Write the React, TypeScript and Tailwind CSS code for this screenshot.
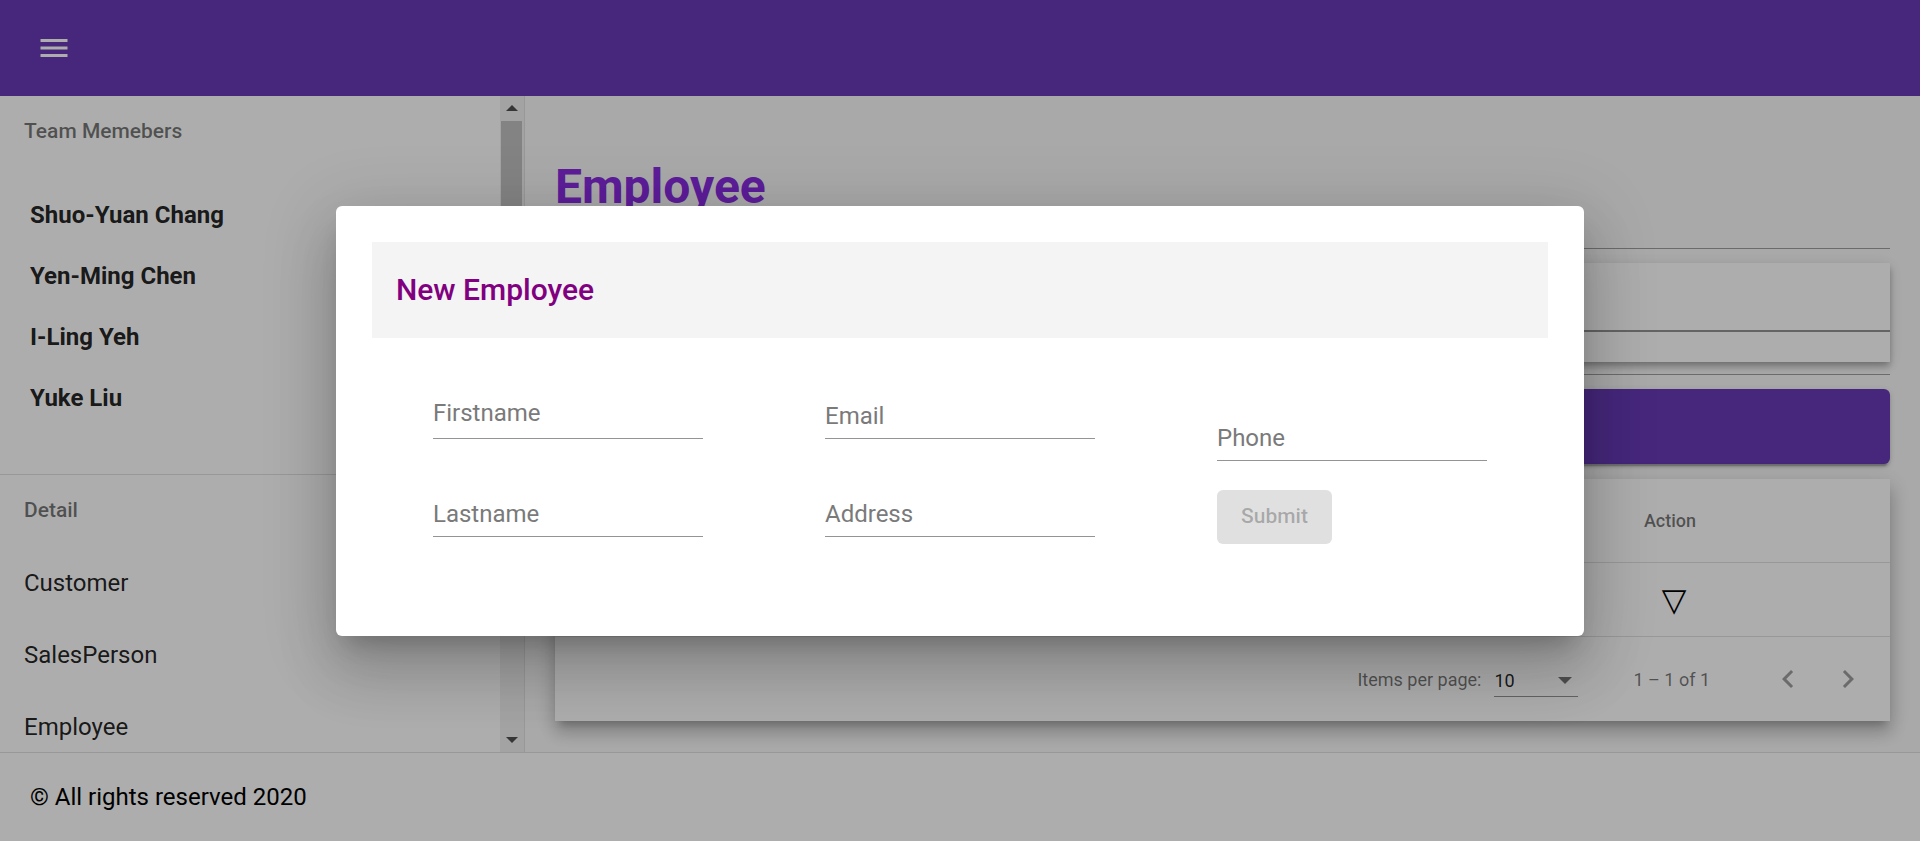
import React from 'react';

const teamMembers = ['Shuo-Yuan Chang', 'Yen-Ming Chen', 'I-Ling Yeh', 'Yuke Liu'];
const detailLinks = ['Customer', 'SalesPerson', 'Employee'];

// columns left of Action sit under the dialog, so they stay empty here
const hiddenColumns = 4;

const MenuIcon = () => (
  <svg width="36" height="36" viewBox="0 0 24 24" fill="#ffffff">
    <path d="M3 18h18v-2H3v2zm0-5h18v-2H3v2zm0-7v2h18V6H3z" />
  </svg>
);

const Chevron = ({ dir }: { dir: 'left' | 'right' }) => (
  <svg width="36" height="36" viewBox="0 0 24 24" fill="rgba(0,0,0,0.38)">
    {dir === 'left' ? (
      <path d="M15.41 7.41L14 6l-6 6 6 6 1.41-1.41L10.83 12z" />
    ) : (
      <path d="M10 6L8.59 7.41 13.17 12l-4.58 4.59L10 18l6-6z" />
    )}
  </svg>
);

const Scrollbar = () => (
  <div className="flex w-[24px] shrink-0 flex-col bg-[#f1f1f1]">
    <div className="flex h-[24px] items-center justify-center">
      <div className="h-0 w-0 border-x-[6px] border-b-[6px] border-x-transparent border-b-[#505050]" />
    </div>
    <div className="ml-[1px] mt-[1px] h-[430px] w-[21px] bg-[#c1c1c1]" />
    <div className="flex-1" />
    <div className="flex h-[24px] items-center justify-center">
      <div className="h-0 w-0 border-x-[6px] border-t-[6px] border-x-transparent border-t-[#505050]" />
    </div>
  </div>
);

const Field = ({ label, type = 'text', shift = true }: { label: string; type?: string; shift?: boolean }) => (
  <div className="h-[98px] w-[270px] pt-[20px]">
    <div className={`h-[49px] border-b border-[#949494] ${shift ? 'pt-[13px]' : 'pt-[10px]'}`}>
      <input
        type={type}
        placeholder={label}
        className="h-[27px] w-full bg-transparent text-[24px] leading-[27px] text-black outline-none placeholder:text-[#7a7a7a]"
      />
    </div>
  </div>
);

export default function App() {
  return (
    <div className="relative h-[841px] w-full overflow-hidden bg-white font-[Roboto,sans-serif]">
      <div className="flex h-full flex-col">
        <header className="flex h-[96px] shrink-0 items-center bg-[#673ab7] pl-[24px]">
          <button className="flex h-[60px] w-[60px] items-center justify-center">
            <MenuIcon />
          </button>
        </header>

        <div className="flex min-h-0 flex-1">
          <aside className="flex w-[525px] shrink-0 border-r border-[#e0e0e0] bg-white">
            <div className="flex-1 overflow-hidden">
              <div className="flex h-[72px] items-center pl-[24px] text-[21px] font-medium text-[rgba(0,0,0,0.54)]">
                Team Memebers
              </div>
              <div className="pb-[46px] pt-[16px]">
                {teamMembers.map(name => (
                  <div key={name} className="flex h-[61px] items-center pl-[30px] text-[24px] font-bold text-[rgba(0,0,0,0.87)]">
                    {name}
                  </div>
                ))}
              </div>
              <div className="border-t border-[#e0e0e0]">
                <div className="flex h-[72px] items-center pl-[24px] text-[21px] font-medium text-[rgba(0,0,0,0.54)]">
                  Detail
                </div>
                {detailLinks.map(link => (
                  <div key={link} className="flex h-[72px] items-center pl-[24px] text-[24px] text-[rgba(0,0,0,0.87)]">
                    {link}
                  </div>
                ))}
              </div>
            </div>
            <Scrollbar />
          </aside>

          <main className="flex min-w-0 flex-1 flex-col overflow-hidden bg-[#fafafa] px-[30px] pt-[63px]">
            <h1 className="h-[56px] text-[48px] font-bold leading-[56px] text-[#8a2be2]">Employee</h1>
            <div className="mt-[33px] border-t border-[#9e9e9e]" />

            <div className="mt-[14px] h-[99px] bg-white shadow-[0_3px_6px_-1.5px_rgba(0,0,0,0.2),0_6px_7.5px_0_rgba(0,0,0,0.14),0_1.5px_15px_0_rgba(0,0,0,0.12)]">
              <div className="h-[69px] border-b-2 border-[#949494]" />
            </div>

            <div className="mt-[12px] border-t border-[#9e9e9e]" />

            <div className="mt-[14px] h-[75px] shrink-0 rounded-[6px] bg-[#673ab7] shadow-[0_4.5px_1.5px_-3px_rgba(0,0,0,0.2),0_3px_3px_0_rgba(0,0,0,0.14),0_1.5px_7.5px_0_rgba(0,0,0,0.12)]" />

            <div className="mt-[15px] bg-white shadow-[0_7.5px_7.5px_-4.5px_rgba(0,0,0,0.2),0_12px_15px_1.5px_rgba(0,0,0,0.14),0_4.5px_21px_3px_rgba(0,0,0,0.12)]">
              <div className="flex h-[84px] items-center border-b border-[#e0e0e0] text-[18px] font-medium text-[rgba(0,0,0,0.54)]">
                {Array.from({ length: hiddenColumns }).map((_, i) => (
                  <div key={i} className="flex-1" />
                ))}
                <div className="w-[440px] text-center">Action</div>
              </div>
              <div className="flex h-[74px] items-center border-b border-[#e0e0e0]">
                {Array.from({ length: hiddenColumns }).map((_, i) => (
                  <div key={i} className="flex-1" />
                ))}
                <div className="w-[440px] pl-[8px] text-center font-['DejaVu_Sans',sans-serif] text-[32px] leading-none text-black">▽</div>
              </div>
              <div className="flex h-[84px] items-center justify-end pr-[12px] text-[18px] text-[rgba(0,0,0,0.54)]">
                <span>Items per page:</span>
                <div className="ml-[13px] flex h-[36px] w-[84px] items-center justify-between border-b border-[#949494] pt-[4px]">
                  <span className="text-[rgba(0,0,0,0.87)]">10</span>
                  <div className="mr-[6px] h-0 w-0 border-x-[7px] border-t-[7px] border-x-transparent border-t-[rgba(0,0,0,0.54)]" />
                </div>
                <span className="ml-[55px]">1 – 1 of 1</span>
                <button className="ml-[48px] flex h-[60px] w-[60px] items-center justify-center">
                  <Chevron dir="left" />
                </button>
                <button className="flex h-[60px] w-[60px] items-center justify-center">
                  <Chevron dir="right" />
                </button>
              </div>
            </div>
          </main>
        </div>

        <footer className="flex h-[89px] shrink-0 items-center border-t border-[#e0e0e0] bg-white pl-[30px] text-[24px] text-black">
          © All rights reserved 2020
        </footer>
      </div>

      <div className="absolute inset-0 flex items-center justify-center bg-[rgba(0,0,0,0.32)]">
        <div className="h-[430px] w-[1248px] rounded-[6px] bg-white p-[36px] shadow-[0_16px_22px_-10px_rgba(0,0,0,0.2),0_36px_57px_4px_rgba(0,0,0,0.14),0_13px_69px_12px_rgba(0,0,0,0.12)]">
          <div className="flex h-[96px] items-center bg-[#f4f4f4] pl-[24px]">
            <h2 className="text-[30px] font-medium text-[#800080]">New Employee</h2>
          </div>
          <form className="grid grid-cols-3 items-center pt-[32px]">
            <div className="flex flex-col items-center">
              <Field label="Firstname" shift={false} />
              <Field label="Lastname" />
            </div>
            <div className="flex flex-col items-center">
              <Field label="Email" type="email" />
              <Field label="Address" />
            </div>
            <div className="flex justify-center">
              <div className="w-[270px]">
                <Field label="Phone" type="tel" />
                <button
                  type="submit"
                  disabled
                  className="h-[54px] w-[115px] rounded-[6px] bg-[#e0e0e0] text-[21px] font-medium text-[rgba(0,0,0,0.26)]"
                >
                  Submit
                </button>
              </div>
            </div>
          </form>
        </div>
      </div>
    </div>
  );
}
